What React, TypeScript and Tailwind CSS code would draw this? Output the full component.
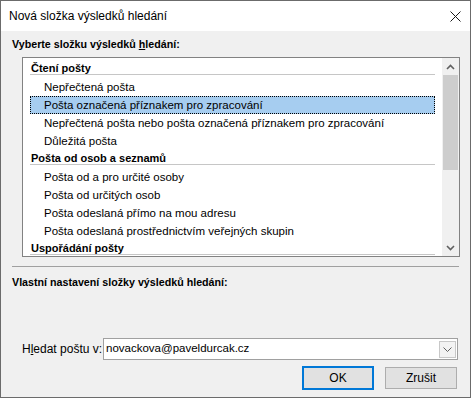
import React from 'react';

const font = { fontFamily: '"Liberation Sans", Arial, sans-serif' };

type Row = { text: string; header?: boolean; selected?: boolean };

const rows: Row[] = [
    { text: 'Čtení pošty', header: true },
    { text: 'Nepřečtená pošta' },
    { text: 'Pošta označená příznakem pro zpracování', selected: true },
    { text: 'Nepřečtená pošta nebo pošta označená příznakem pro zpracování' },
    { text: 'Důležitá pošta' },
    { text: 'Pošta od osob a seznamů', header: true },
    { text: 'Pošta od a pro určité osoby' },
    { text: 'Pošta od určitých osob' },
    { text: 'Pošta odeslaná přímo na mou adresu' },
    { text: 'Pošta odeslaná prostřednictvím veřejných skupin' },
    { text: 'Uspořádání pošty', header: true },
];

const Chevron = ({ up }: { up?: boolean }) => (
    <svg width="9" height="6" viewBox="0 0 9 6">
        <path
            d={up ? 'M1 5 L4.5 1.5 L8 5' : 'M1 1 L4.5 4.5 L8 1'}
            fill="none"
            stroke="#606060"
            strokeWidth="1.6"
        />
    </svg>
);

const ListRow = ({ row }: { row: Row }) => {
    if (row.header) {
        return (
            <div className="flex h-[18px] shrink-0 flex-col">
                <span className="h-[14px] pl-[1px] text-[11px] font-bold leading-[16px] text-black">
                    {row.text}
                </span>
                <div className="h-px bg-[#c6c6c6]" />
            </div>
        );
    }
    return (
        <div
            className={
                row.selected
                    ? 'h-[18px] shrink-0 border border-dotted border-black bg-[#a6cdf0] pl-[13px] text-[11.5px] leading-[16px] text-black'
                    : 'h-[18px] shrink-0 pl-[14px] text-[11.5px] leading-[18px] text-black'
            }
        >
            {row.text}
        </div>
    );
};

export default function App() {
    return (
        <div
            className="flex h-[398px] w-[471px] flex-col border border-[#6b6b6b] bg-[#f0f0f0]"
            style={font}
        >
            {/* Title bar */}
            <div className="flex h-[30px] shrink-0 items-center justify-between bg-white pl-[8px] pr-[9px]">
                <span className="text-[12px] text-black">Nová složka výsledků hledání</span>
                <svg width="11" height="11" viewBox="0 0 11 11">
                    <path d="M0.5 0.5 L10.5 10.5 M10.5 0.5 L0.5 10.5" stroke="#1a1a1a" strokeWidth="1" />
                </svg>
            </div>

            {/* Body */}
            <div className="flex flex-1 flex-col">
                <div className="ml-[11px] mt-[6px] text-[10.7px] font-bold leading-[15px] text-black">
                    Vyberte složku výsledků <span className="underline">h</span>ledání:
                </div>

                {/* List box */}
                <div className="ml-[21px] mt-[5px] flex h-[200px] w-[438px] border border-[#828282] bg-white">
                    <div className="flex flex-1 flex-col overflow-hidden px-[7px] pt-[2px]">
                        {rows.map((r) => (
                            <ListRow key={r.text} row={r} />
                        ))}
                    </div>
                    <div className="flex w-[17px] flex-col bg-[#f0f0f0]">
                        <div className="flex h-[17px] items-center justify-center">
                            <Chevron up />
                        </div>
                        <div className="mx-[1px] h-[95px] bg-[#cdcdcd]" />
                        <div className="flex-1" />
                        <div className="flex h-[17px] items-center justify-center">
                            <Chevron />
                        </div>
                    </div>
                </div>

                <div className="ml-[11px] mt-[9px] h-px w-[447px] bg-[#a0a0a0]" />

                <div className="ml-[11px] mt-[8px] text-[10.7px] font-bold leading-[15px] text-black">
                    Vlastní nastavení složky výsledků hledání:
                </div>

                {/* Search in */}
                <div className="ml-[21px] mt-[48px] flex h-[22px] items-center">
                    <span className="w-[81px] text-[12px] text-black">
                        H<span className="underline">l</span>edat poštu v:
                    </span>
                    <div className="flex h-[22px] w-[355px] items-center justify-between border border-[#a0a0a0] bg-white pl-[2px] pr-[1px]">
                        <span className="text-[11.5px] text-black">novackova@paveldurcak.cz</span>
                        <div className="flex h-[17px] w-[17px] items-center justify-center border border-[#c8c8c8] bg-[#f3f3f3]">
                            <svg width="9" height="5" viewBox="0 0 9 5">
                                <path d="M0.5 0.5 L4.5 4.5 L8.5 0.5" fill="none" stroke="#606060" strokeWidth="1" />
                            </svg>
                        </div>
                    </div>
                </div>

                {/* Buttons */}
                <div className="ml-[301px] mt-[6px] flex h-[24px] items-center gap-[11px]">
                    <button className="h-[24px] w-[72px] border-2 border-[#0078d7] bg-[#e1e1e1] text-[12px] text-black">
                        OK
                    </button>
                    <button className="h-[22px] w-[72px] border border-[#adadad] bg-[#e1e1e1] text-[12px] text-black">
                        Zrušit
                    </button>
                </div>
            </div>
        </div>
    );
}
